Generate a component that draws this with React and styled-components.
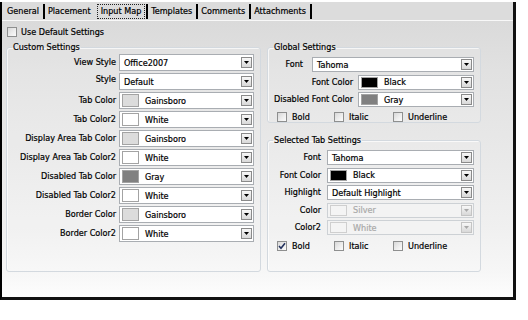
import React from 'react';
import styled, { createGlobalStyle } from 'styled-components';

const GlobalStyle = createGlobalStyle`
  html, body { margin: 0; padding: 0; background: #fff; }
  body {
    font-family: "DejaVu Sans Condensed", "Liberation Sans", sans-serif;
    font-size: 9px;
    color: #000;
    -webkit-text-stroke: 0.2px currentColor;
  }
  * { box-sizing: border-box; }
`;

const Frame = styled.div`
  margin-top: 2px;
  width: 516px;
  height: 298px;
  border-left: 2px solid #000;
  border-right: 3px solid #111;
  border-bottom: 3px solid #111;
  display: flex;
  flex-direction: column;
`;

const TabStrip = styled.div`
  height: 19px;
  display: flex;
  align-items: flex-start;
  padding-left: 2px;
  background: #dcdcdc;
  border-bottom: 1px solid #f8f8f8;
`;

const Tab = styled.div`
  height: 15px;
  margin-top: 2px;
  display: flex;
  align-items: center;
  padding: ${p => (p.$active ? '0 1px 0 0' : '0 4px 0 3px')};
  border-right: 2px solid ${p => (p.$sep ? '#000' : 'transparent')};
  white-space: nowrap;
  line-height: 13px;
`;

const TabFocus = styled.span`
  border: 1px dotted #222;
  padding: 0 3px;
  height: 15px;
  line-height: 13px;
`;

const Content = styled.div`
  flex: 1;
  padding: 6px 0 0 4px;
  background: linear-gradient(to bottom, #dadada 0%, #e1e1e1 18%, #e8e8e8 45%, #f0f0f0 75%, #f6f6f6 90%, #fdfdfd 100%);
`;

const CheckItem = styled.label`
  display: flex;
  align-items: center;
  gap: ${p => p.$gap || 5}px;
  height: 10px;
  line-height: 10px;
  white-space: nowrap;
  margin-left: ${p => p.$ml || 0}px;
`;

const Box = styled.span`
  width: 10px;
  height: 10px;
  flex: none;
  border: 1px solid #8e8f8f;
  background: linear-gradient(135deg, #d8d8d8 0%, #efefef 60%, #fbfbfb 100%);
  display: flex;
  align-items: center;
  justify-content: center;
`;

const Columns = styled.div`
  display: flex;
  gap: 6px;
  margin-top: 5px;
  height: 230px;
`;

const Group = styled.fieldset`
  margin: 0;
  min-width: 0;
  width: ${p => (p.$w ? `${p.$w}px` : 'auto')};
  flex: ${p => (p.$grow ? 1 : 'none')};
  margin-top: ${p => p.$mt || 0}px;
  padding: 0 6px ${p => p.$pb || 0}px 5px;
  border: 1px solid #d3d9df;
  border-radius: 3px;
  box-shadow: inset 1px 1px 0 rgba(255,255,255,0.7);
  background: rgba(255,255,255,0.12);
`;

const Legend = styled.legend`
  padding: 0 1px;
  line-height: 11px;
  font-size: 9px;
  white-space: nowrap;
`;

const FormGrid = styled.div`
  display: grid;
  grid-template-columns: 1fr 135px;
  grid-auto-rows: 17px;
  column-gap: 3px;
  row-gap: 2px;
  padding-top: 1px;
`;

const GridLabel = styled.div`
  text-align: right;
  white-space: nowrap;
  align-self: ${p => (p.$top ? 'start' : 'center')};
  line-height: 11px;
  padding-top: ${p => (p.$top ? 1 : 0)}px;
`;

const RightColumn = styled.div`
  width: 214px;
  display: flex;
  flex-direction: column;
`;

const Rows = styled.div`
  display: flex;
  flex-direction: column;
  gap: 2.5px;
  padding-top: 4px;
`;

const Row = styled.div`
  display: flex;
  align-items: center;
  gap: ${p => p.$gap}px;
  height: 15px;
`;

const RowLabel = styled.div`
  width: ${p => p.$w}px;
  flex: none;
  text-align: right;
  white-space: nowrap;
  line-height: 11px;
`;

const CheckRow = styled.div`
  display: grid;
  grid-template-columns: 57px 59px auto;
  padding-left: 4px;
  margin-top: ${p => p.$mt || 6}px;
`;

const Combo = styled.div`
  flex: 1;
  min-width: 0;
  height: ${p => p.$h}px;
  display: flex;
  align-items: stretch;
  padding: 1px;
  border: 1px solid ${p => (p.$disabled ? '#cdd1d5' : '#a9adb2')};
  background: ${p => (p.$disabled ? '#f3f3f3' : '#fff')};
  color: ${p => (p.$disabled ? '#a9a9a9' : '#000')};
`;

const Swatch = styled.span`
  width: 17px;
  flex: none;
  margin: 0 0 0 1px;
  border: 1px solid ${p => (p.$disabled ? '#cfcfcf' : '#a3a3a3')};
  background: ${p => p.$color};
`;

const Value = styled.span`
  flex: 1;
  display: flex;
  align-items: center;
  padding-left: ${p => (p.$swatch ? 6 : 3)}px;
  white-space: nowrap;
  overflow: hidden;
`;

const DropButton = styled.span`
  width: 11px;
  flex: none;
  margin: ${p => (p.$small ? 0 : 1)}px 0;
  border: 1px solid ${p => (p.$disabled ? '#c4c4c4' : '#8a8a8a')};
  background: linear-gradient(to bottom, #f8f8f8 0%, #e6e6e6 55%, #d8d8d8 100%);
  display: flex;
  align-items: center;
  justify-content: center;
`;

const Arrow = ({ disabled }) => (
  <svg width="5" height="3" viewBox="0 0 5 3">
    <polygon points="0,0 5,0 2.5,3" fill={disabled ? '#a8a8a8' : '#000'} />
  </svg>
);

const Check = () => (
  <svg width="8" height="8" viewBox="0 0 8 8">
    <path d="M1 4 L3 6.2 L7 1.2" stroke="#23325e" strokeWidth="1.6" fill="none" />
  </svg>
);

const ComboBox = ({ h = 17, value, color, disabled }) => {
  const small = h < 17;
  return (
    <Combo $h={h} $disabled={disabled}>
      {color && <Swatch $color={color} $disabled={disabled} />}
      <Value $swatch={!!color}>{value}</Value>
      <DropButton $small={small} $disabled={disabled}>
        <Arrow disabled={disabled} />
      </DropButton>
    </Combo>
  );
};

const CheckBox = ({ label, checked, gap }) => (
  <CheckItem $gap={gap}>
    <Box>{checked && <Check />}</Box>
    <span>{label}</span>
  </CheckItem>
);

const customRows = [
  { label: 'View Style', value: 'Office2007' },
  { label: 'Style', value: 'Default', top: true },
  { label: 'Tab Color', value: 'Gainsboro', color: '#dcdcdc' },
  { label: 'Tab Color2', value: 'White', color: '#ffffff' },
  { label: 'Display Area Tab Color', value: 'Gainsboro', color: '#dcdcdc' },
  { label: 'Display Area Tab Color2', value: 'White', color: '#ffffff' },
  { label: 'Disabled Tab Color', value: 'Gray', color: '#808080' },
  { label: 'Disabled Tab Color2', value: 'White', color: '#ffffff' },
  { label: 'Border Color', value: 'Gainsboro', color: '#dcdcdc' },
  { label: 'Border Color2', value: 'White', color: '#ffffff' },
];

const tabs = [
  { name: 'General', sep: true },
  { name: 'Placement', sep: false },
  { name: 'Input Map', sep: true, active: true },
  { name: 'Templates', sep: true },
  { name: 'Comments', sep: true },
  { name: 'Attachments', sep: true },
];

export default function App() {
  return (
    <>
      <GlobalStyle />
      <Frame>
        <TabStrip>
          {tabs.map(t => (
            <Tab key={t.name} $sep={t.sep} $active={t.active}>
              {t.active ? <TabFocus>{t.name}</TabFocus> : t.name}
            </Tab>
          ))}
        </TabStrip>
        <Content>
          <CheckItem $gap={4} $ml={1}>
            <Box />
            <span>Use Default Settings</span>
          </CheckItem>
          <Columns>
            <Group $w={255}>
              <Legend>Custom Settings</Legend>
              <FormGrid>
                {customRows.map(r => (
                  <React.Fragment key={r.label}>
                    <GridLabel $top={r.top}>{r.label}</GridLabel>
                    <ComboBox value={r.value} color={r.color} />
                  </React.Fragment>
                ))}
              </FormGrid>
            </Group>
            <RightColumn>
              <Group $pb={0}>
                <Legend>Global Settings</Legend>
                <Rows>
                  <Row $gap={9}>
                    <RowLabel $w={30}>Font</RowLabel>
                    <ComboBox h={15} value="Tahoma" />
                  </Row>
                  <Row $gap={5}>
                    <RowLabel $w={80}>Font Color</RowLabel>
                    <ComboBox h={15} value="Black" color="#000" />
                  </Row>
                  <Row $gap={5}>
                    <RowLabel $w={80}>Disabled Font Color</RowLabel>
                    <ComboBox h={15} value="Gray" color="#808080" />
                  </Row>
                </Rows>
                <CheckRow $mt={5}>
                  <CheckBox label="Bold" />
                  <CheckBox label="Italic" />
                  <CheckBox label="Underline" />
                </CheckRow>
              </Group>
              <Group $grow $mt={12}>
                <Legend>Selected Tab Settings</Legend>
                <Rows>
                  <Row $gap={6}>
                    <RowLabel $w={48}>Font</RowLabel>
                    <ComboBox h={15} value="Tahoma" />
                  </Row>
                  <Row $gap={6}>
                    <RowLabel $w={48}>Font Color</RowLabel>
                    <ComboBox h={15} value="Black" color="#000" />
                  </Row>
                  <Row $gap={6}>
                    <RowLabel $w={48}>Highlight</RowLabel>
                    <ComboBox h={15} value="Default Highlight" />
                  </Row>
                  <Row $gap={6}>
                    <RowLabel $w={48}>Color</RowLabel>
                    <ComboBox h={15} value="Silver" color="#f4f4f4" disabled />
                  </Row>
                  <Row $gap={6}>
                    <RowLabel $w={48}>Color2</RowLabel>
                    <ComboBox h={15} value="White" color="#f4f4f4" disabled />
                  </Row>
                </Rows>
                <CheckRow>
                  <CheckBox label="Bold" checked />
                  <CheckBox label="Italic" />
                  <CheckBox label="Underline" />
                </CheckRow>
              </Group>
            </RightColumn>
          </Columns>
        </Content>
      </Frame>
    </>
  );
}
